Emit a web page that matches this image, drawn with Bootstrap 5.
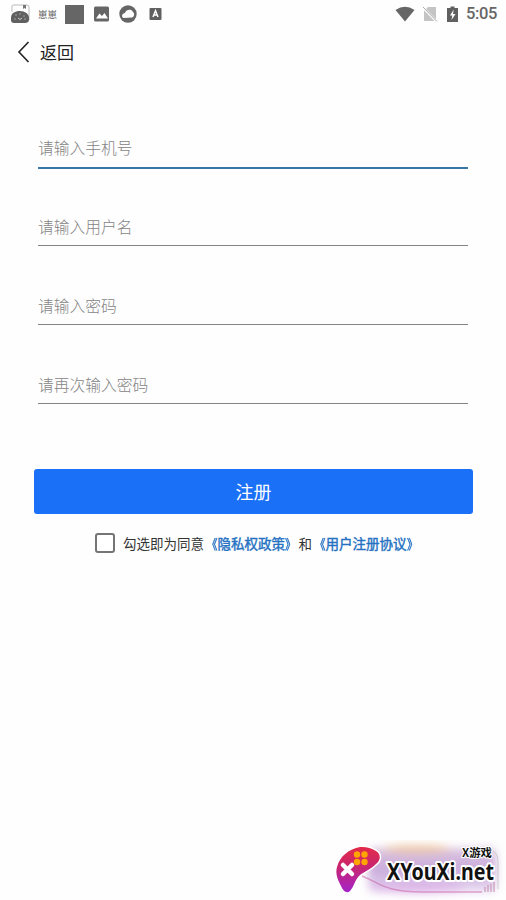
<!DOCTYPE html>
<html lang="zh-CN">
<head>
<meta charset="utf-8">
<meta name="viewport" content="width=device-width, initial-scale=1">
<title>注册</title>
<link href="https://cdn.jsdelivr.net/npm/bootstrap@5.3.0/dist/css/bootstrap.min.css" rel="stylesheet">
<style>
body{font-family:"Noto Sans CJK SC",sans-serif;color:#333;background:#fefefe;height:900px;overflow:hidden}
svg{display:block;flex-shrink:0}
.status-bar{height:28px;padding:0 9px 0 10px;color:#666}
.app-name{font-size:9.5px;line-height:20px;margin:0 8px;width:19px;white-space:nowrap}
.clock{font:500 16.5px/28px Roboto,sans-serif;margin-left:8px;width:31px;letter-spacing:-.35px}
.back-bar{height:47px;padding-left:17px}
.back-label{font-size:17px;line-height:24px;color:#222;margin-left:9px}
.register-form{padding:51px 38px 0}
.field{height:42px;margin-bottom:37px;border-bottom:1px solid #858585}
.field.active{height:43px;border-bottom:2px solid #3977a4;margin-bottom:35px}
.field .form-control{font-size:15.75px;font-weight:300;line-height:24px;height:40px;padding:10px 0 6px}
.field.active .form-control{padding:9px 0 7px}
.field .form-control::placeholder{color:#858585;opacity:1}
.submit{height:45px;margin:65px -5px 0 -4px;background:#1b70f8;border-radius:3px;font-size:18px;line-height:45px}
.agreement{font-size:13.5px;line-height:20px;margin-top:19px;padding-left:57px;white-space:nowrap}
.agreement .form-check-input{width:20px;height:20px;border:2px solid #757575;border-radius:3px;margin:0 8px 0 0;flex-shrink:0}
.agreement a{color:#2471c2;-webkit-text-stroke:.4px #2471c2}
.open-mark,.close-mark{display:inline-block;transform:scaleX(.8);transform-origin:100% 50%}
.close-mark{transform-origin:0 50%}
.watermark{left:332px;top:840px;width:174px;height:60px}
</style>
<script src="https://cdn.jsdelivr.net/npm/bootstrap@5.3.0/dist/js/bootstrap.bundle.min.js" defer></script>
</head>
<body class="position-relative">
<header class="status-bar d-flex align-items-center">
  <svg width="20" height="20" viewBox="0 0 20 20"><path d="M2 8V2Q2 1 4 1H17Q19 1 19 3V16" fill="none" stroke="#aaa" stroke-width=".8"/><path d="M13 1h3v4l-1.5-1L13 5z" fill="#777"/><path d="M1 14C1 9 5 7 10 7s9 3 9 7v2c0 2-2 3-4 3H4c-2 0-3-1-3-3z" fill="#606060"/><g fill="#bbb"><circle cx="6" cy="11" r=".7"/><circle cx="10" cy="10" r=".7"/><circle cx="14" cy="12" r=".7"/><circle cx="5" cy="15" r=".7"/><circle cx="15" cy="15" r=".7"/></g><path d="M8 14q2 3 4 0" fill="none" stroke="#ccc"/></svg>
  <span class="app-name">崽崽</span>
  <svg width="19" height="19"><path d="M0 0h19v19H0z" fill="#666"/></svg>
  <svg class="ms-2" width="19" height="18" viewBox="0 0 19 18"><rect x="2" y="1.500" width="15" height="15" rx="1.500" fill="#666"/><path d="M4 13.500l3.500-5L10 11 12.500 8l3.500 5.500z" fill="#fff"/></svg>
  <svg class="ms-2" width="18" height="18" viewBox="0 0 18 18"><circle cx="9" cy="9" r="8.700" fill="#666"/><path d="M4.500 13C2 12 3 8 6 8c1-4 7-4 7.500-1.500C16 8 15.500 12 13 12.500z" fill="#fff"/></svg>
  <svg width="13" height="14" viewBox="0 0 13 14" style="margin-left:12px"><rect x=".5" y="1" width="12" height="12" rx="1" fill="#606060"/><path d="M4 10L6.500 3.800 9 10M5 8h3" fill="none" stroke="#fff" stroke-width="1.500"/></svg>
  <div class="d-flex align-items-center ms-auto">
    <svg width="20" height="16" viewBox="0 0 20 16"><path d="M.5 4Q10-2.500 19.500 4L10 15.500z" fill="#666"/></svg>
    <svg width="16" height="18" viewBox="0 0 16 18" style="margin-left:7px"><path d="M6 2h8v14H2V6z" fill="#c4c4c4"/><path d="M1 2.500L15 17" stroke="#fff" stroke-width="2.500"/><path d="M1 2L15 16.500" stroke="#aaa"/></svg>
    <svg width="11" height="17" viewBox="0 0 11 17" style="margin-left:9px"><path d="M0 2h3.500V.500h4V2H11v14H0z" fill="#606060"/><path d="M6.700 3.500L3 9.500h2.300l-.8 4.500L8.500 8H6z" fill="#fff"/></svg>
    <span class="clock">5:05</span>
  </div>
</header>
<nav class="back-bar d-flex align-items-center">
  <svg width="14" height="22" viewBox="0 0 14 22"><path d="M11.500 1L2 11l9.500 10" fill="none" stroke="#222" stroke-width="1.600"/></svg>
  <span class="back-label">返回</span>
</nav>
<main>
  <form class="register-form">
    <div class="field active"><input class="form-control border-0 rounded-0 bg-transparent shadow-none" type="tel" placeholder="请输入手机号"></div>
    <div class="field"><input class="form-control border-0 rounded-0 bg-transparent shadow-none" type="text" placeholder="请输入用户名"></div>
    <div class="field"><input class="form-control border-0 rounded-0 bg-transparent shadow-none" type="password" placeholder="请输入密码"></div>
    <div class="field mb-0"><input class="form-control border-0 rounded-0 bg-transparent shadow-none" type="password" placeholder="请再次输入密码"></div>
    <div class="d-grid"><button type="button" class="submit btn btn-primary border-0 p-0">注册</button></div>
    <div class="agreement d-flex align-items-center">
      <input class="form-check-input" type="checkbox" id="agree">
      <label for="agree">勾选即为同意</label><a class="text-decoration-none" href="#"><span class="open-mark">《</span>隐私权政策<span class="close-mark">》</span></a><span>和</span><a class="text-decoration-none" href="#"><span class="open-mark">《</span>用户注册协议<span class="close-mark">》</span></a>
    </div>
  </form>
</main>
<svg class="watermark position-absolute" viewBox="0 0 174 60">
  <defs>
    <linearGradient id="pad" x1="0" y1="0" x2="0" y2="1"><stop stop-color="#e22b48"/><stop offset=".45" stop-color="#c82672"/><stop offset="1" stop-color="#a324c9"/></linearGradient>
    <linearGradient id="haze" x1="0" y1="0" x2="0" y2="1"><stop stop-color="#dcc5df"/><stop offset=".5" stop-color="#c9abdc"/><stop offset="1" stop-color="#eadcf2"/></linearGradient>
    <filter id="soft" x="-20%" y="-50%" width="140%" height="200%"><feGaussianBlur stdDeviation="4"/></filter>
  </defs>
  <g filter="url(#soft)"><rect x="36" y="8" width="128" height="44" rx="6" fill="url(#haze)"/><ellipse cx="85" cy="9" rx="34" ry="4" fill="#edc7a6"/><ellipse cx="85" cy="48" rx="48" ry="5" fill="#dcb3e7"/></g>
  <path d="M30 36C50 44 52 52 92 52H150" fill="none" stroke="#c85aa0" stroke-width="1.500" opacity=".5"/>
  <path d="M155 10Q166 9 166 22V49" fill="none" stroke="#ccc" stroke-width="1"/>
  <path d="M153 52v-5m3 5v-7m3 7v-8m3 8v-10" stroke="#c28aac" stroke-width="1"/>
  <path d="M5 27C8 16 17 9 28 7c6-.5 11 1 16 4 5 3 5 9 0 13-5 5-12 8-16 11-5 4-6 12-10 16-3 3-7 0-9-5C6 40 3 34 5 27z" fill="url(#pad)" stroke="#fff" stroke-width="3" paint-order="stroke"/>
  <g fill="#ffa500"><circle cx="25" cy="14.500" r="3.200"/><circle cx="32.500" cy="14.500" r="3.200"/><circle cx="25" cy="22" r="3.200"/><circle cx="32.500" cy="22" r="3.200"/></g>
  <path d="M11 25l9 9m0-9l-9 9" stroke="#fff" stroke-width="4.500" stroke-linecap="round"/>
  <g fill="#111" stroke="#fff" stroke-linejoin="round" paint-order="stroke" font-weight="700">
    <text x="55" y="40" font-size="23" stroke-width="4" font-family="'Noto Sans',sans-serif" textLength="107" lengthAdjust="spacingAndGlyphs">XYouXi.net</text>
    <text x="130" y="16.500" font-size="11" stroke-width="2" font-family="'Noto Sans CJK SC',sans-serif" textLength="30" lengthAdjust="spacingAndGlyphs">X游戏</text>
  </g>
</svg>
</body>
</html>
